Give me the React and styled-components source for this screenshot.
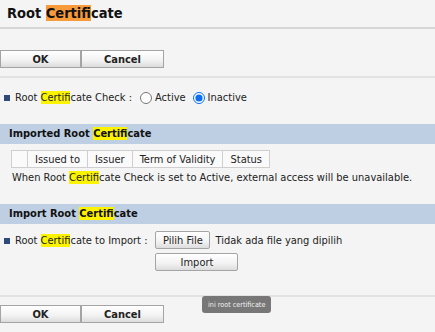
import React from 'react'
import styled, { createGlobalStyle } from 'styled-components'

const GlobalStyle = createGlobalStyle`
  html, body {
    margin: 0;
    padding: 0;
    background: #f4f4f4;
  }
  body {
    font-family: "DejaVu Sans Condensed", "DejaVu Sans", Verdana, sans-serif;
    font-size: 11px;
    color: #222;
  }
`;

const Page = styled.div`
  width: 435px;
  height: 332px;
  overflow: hidden;
  position: relative;
  background: #f4f4f4;
`;

const Title = styled.h1`
  margin: 0;
  height: 29px;
  padding: 5px 0 0 7px;
  box-sizing: border-box;
  font-size: 14.5px;
  font-weight: bold;
  color: #111;
  border-bottom: 2px solid #d6d6d6;
`;

const Mark = styled.span`
  background: ${props => props.orange ? '#f79a3a' : '#fbf300'};
`;

const ButtonBar = styled.div`
  display: flex;
  padding: ${props => props.top ? '21px 0 8px' : '8px 0 0'};
  border-bottom: ${props => props.top ? '2px solid #e2e2e2' : 'none'};
  border-top: ${props => props.top ? 'none' : '2px solid #e2e2e2'};
`;

const Button = styled.button`
  width: ${props => props.width || 82}px;
  height: ${props => props.height || 18}px;
  padding: 0;
  margin: 0;
  font-family: inherit;
  font-size: 11px;
  font-weight: ${props => props.bold ? 'bold' : 'normal'};
  color: #222;
  border: 1px solid #a4a4a4;
  border-radius: ${props => props.round ? '2px' : '0'};
  background: linear-gradient(#ffffff, #f2f2f2 60%, #dcdcdc);
  cursor: pointer;
`;

const Row = styled.div`
  display: flex;
  align-items: ${props => props.top ? 'flex-start' : 'center'};
  padding: ${props => props.pad || '0'};
  white-space: nowrap;
`;

const Bullet = styled.span`
  width: 6px;
  height: 6px;
  background: #2e4a7a;
  margin: ${props => props.mt || 0}px 5px 0 4px;
  flex-shrink: 0;
`;

const Label = styled.span`
  margin-top: ${props => props.mt || 0}px;
`;

const RadioLabel = styled.label`
  display: flex;
  align-items: center;
  margin-left: ${props => props.gap || 6}px;
`;

const Radio = styled.input`
  width: 12px;
  height: 12px;
  margin: 0 3px 0 0;
  accent-color: #0b6ff0;
`;

const SectionHead = styled.div`
  margin-top: ${props => props.mt}px;
  height: 20px;
  line-height: 20px;
  padding-left: 9px;
  background: #bfcfe3;
  font-weight: bold;
  color: #111;
`;

const Table = styled.table`
  margin: 6px 0 0 11px;
  border-collapse: collapse;
  background: #fafafa;

  td {
    border: 1px solid #cfcfcf;
    height: 16px;
    padding: 0 7px;
    white-space: nowrap;
  }

  td:first-child {
    width: 1px;
  }
`;

const Note = styled.div`
  padding: 3px 0 0 12px;
  white-space: nowrap;
`;

const FileName = styled.span`
  margin-left: 5px;
`;

const Stack = styled.div`
  display: flex;
  flex-direction: column;
  gap: 4px;
  margin-left: 8px;
`;

const Spacer = styled.div`
  height: ${props => props.h}px;
`;

const Tooltip = styled.div`
  position: absolute;
  left: 202px;
  top: 296px;
  padding: 4px 6px;
  background: #777;
  color: #f2f2f2;
  border-radius: 3px;
  font-size: 7.2px;
  white-space: nowrap;
`;

const C = () => <><Mark>Certif</Mark>icate</>;

export default function App() {
  return (
    <Page>
      <GlobalStyle />
      <Title>Root <Mark orange>Certif</Mark>icate</Title>
      <ButtonBar top>
        <Button bold width={81}>OK</Button>
        <Button bold width={83}>Cancel</Button>
      </ButtonBar>

      <Row pad="13px 0 0 0">
        <Bullet />
        <Label>Root <C /> Check :</Label>
        <RadioLabel gap={8}><Radio type="radio" name="chk" />Active</RadioLabel>
        <RadioLabel gap={7}><Radio type="radio" name="chk" defaultChecked />Inactive</RadioLabel>
      </Row>

      <SectionHead mt={20}>Imported Root <C /></SectionHead>
      <Table>
        <tbody>
          <tr>
            <td />
            <td>Issued to</td>
            <td>Issuer</td>
            <td>Term of Validity</td>
            <td>Status</td>
          </tr>
        </tbody>
      </Table>
      <Note>When Root <C /> Check is set to Active, external access will be unavailable.</Note>

      <SectionHead mt={20}>Import Root <C /></SectionHead>
      <Row top pad="7px 0 0 0">
        <Bullet mt={7} />
        <Label mt={3}>Root <C /> to Import :</Label>
        <Stack>
          <Row>
            <Button round width={55} height={18}>Pilih File</Button>
            <FileName>Tidak ada file yang dipilih</FileName>
          </Row>
          <Button round width={83} height={18}>Import</Button>
        </Stack>
      </Row>

      <Spacer h={24} />
      <ButtonBar>
        <Button bold width={81}>OK</Button>
        <Button bold width={83}>Cancel</Button>
      </ButtonBar>
      <Tooltip>ini root certificate</Tooltip>
    </Page>
  )
}
